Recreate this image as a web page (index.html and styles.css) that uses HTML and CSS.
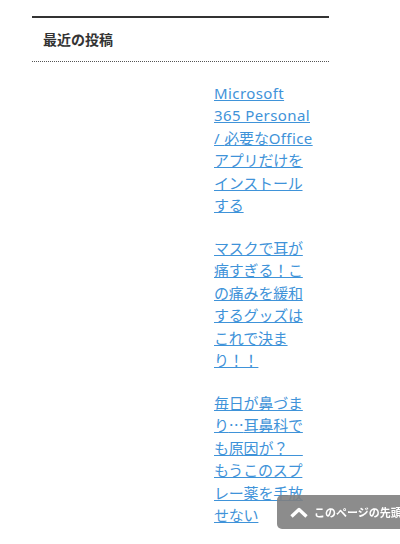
FILE: index.html
```html
<!DOCTYPE html>
<html lang="ja">
<head>
<meta charset="utf-8">
<link rel="stylesheet" href="styles.css">
</head>
<body>
<div class="widget">
  <h3 class="widget-title">最近の投稿</h3>
  <ul class="posts">
    <li><a href="#"><span class="latin">Microsoft</span><br><span class="latin">365 Personal</span><br><span class="latin">/ </span>必要な<span class="latin">Office</span><br>アプリだけを<br>インストール<br>する</a></li>
    <li><a href="#">マスクで耳が<br>痛すぎる！こ<br>の痛みを緩和<br>するグッズは<br>これで決ま<br>り！！</a></li>
    <li><a href="#">毎日が鼻づま<br>り<span class="cjk">…</span>耳鼻科で<br>も原因が？　<br>もうこのスプ<br>レー薬を手放<br>せない</a></li>
  </ul>
</div>
<a class="totop" href="#">
  <svg class="chev" width="18" height="11" viewBox="0 0 18 11"><path d="M1.5 9.5 L9 2.5 L16.5 9.5" fill="none" stroke="#fff" stroke-width="3.4" stroke-linejoin="round"/></svg>
  <span>このページの先頭へ</span>
</a>
</body>
</html>
```

FILE: styles.css
```css
html, body {
  margin: 0;
  padding: 0;
  background: #fff;
}
body {
  font-family: "Noto Sans CJK JP", "Noto Sans", sans-serif;
  color: #333;
}
.widget {
  margin: 16px 0 0 32px;
  width: 297px;
  border-top: 2px solid #333;
}
.widget-title {
  margin: 0;
  padding: 11px 0 11px 11px;
  font-size: 14px;
  line-height: 21px;
  font-weight: bold;
  color: #333;
  border-bottom: 1px dotted #555;
}
.posts {
  list-style: none;
  margin: 20px 0 0 182px;
  padding: 0;
  width: 110px;
}
.posts li {
  font-family: "Noto Sans", "Noto Sans CJK JP", sans-serif;
  font-size: 15px;
  line-height: 22.4px;
  margin-bottom: 20.5px;
  white-space: nowrap;
}
.posts a {
  color: #3f93d9;
  text-decoration: underline;
  letter-spacing: -0.2px;
}
.posts a .latin {
  letter-spacing: 0.4px;
}
.cjk {
  font-family: "Noto Sans CJK JP", sans-serif;
}
.totop {
  position: fixed;
  left: 277px;
  bottom: 15px;
  width: 140px;
  height: 34px;
  background: rgba(128, 128, 128, 0.9);
  border-radius: 5px;
  display: flex;
  align-items: center;
  padding-left: 13px;
  box-sizing: border-box;
  text-decoration: none;
  color: #fff;
  font-size: 11px;
  font-weight: bold;
}
.chev {
  margin-right: 6px;
  flex: none;
}
```
